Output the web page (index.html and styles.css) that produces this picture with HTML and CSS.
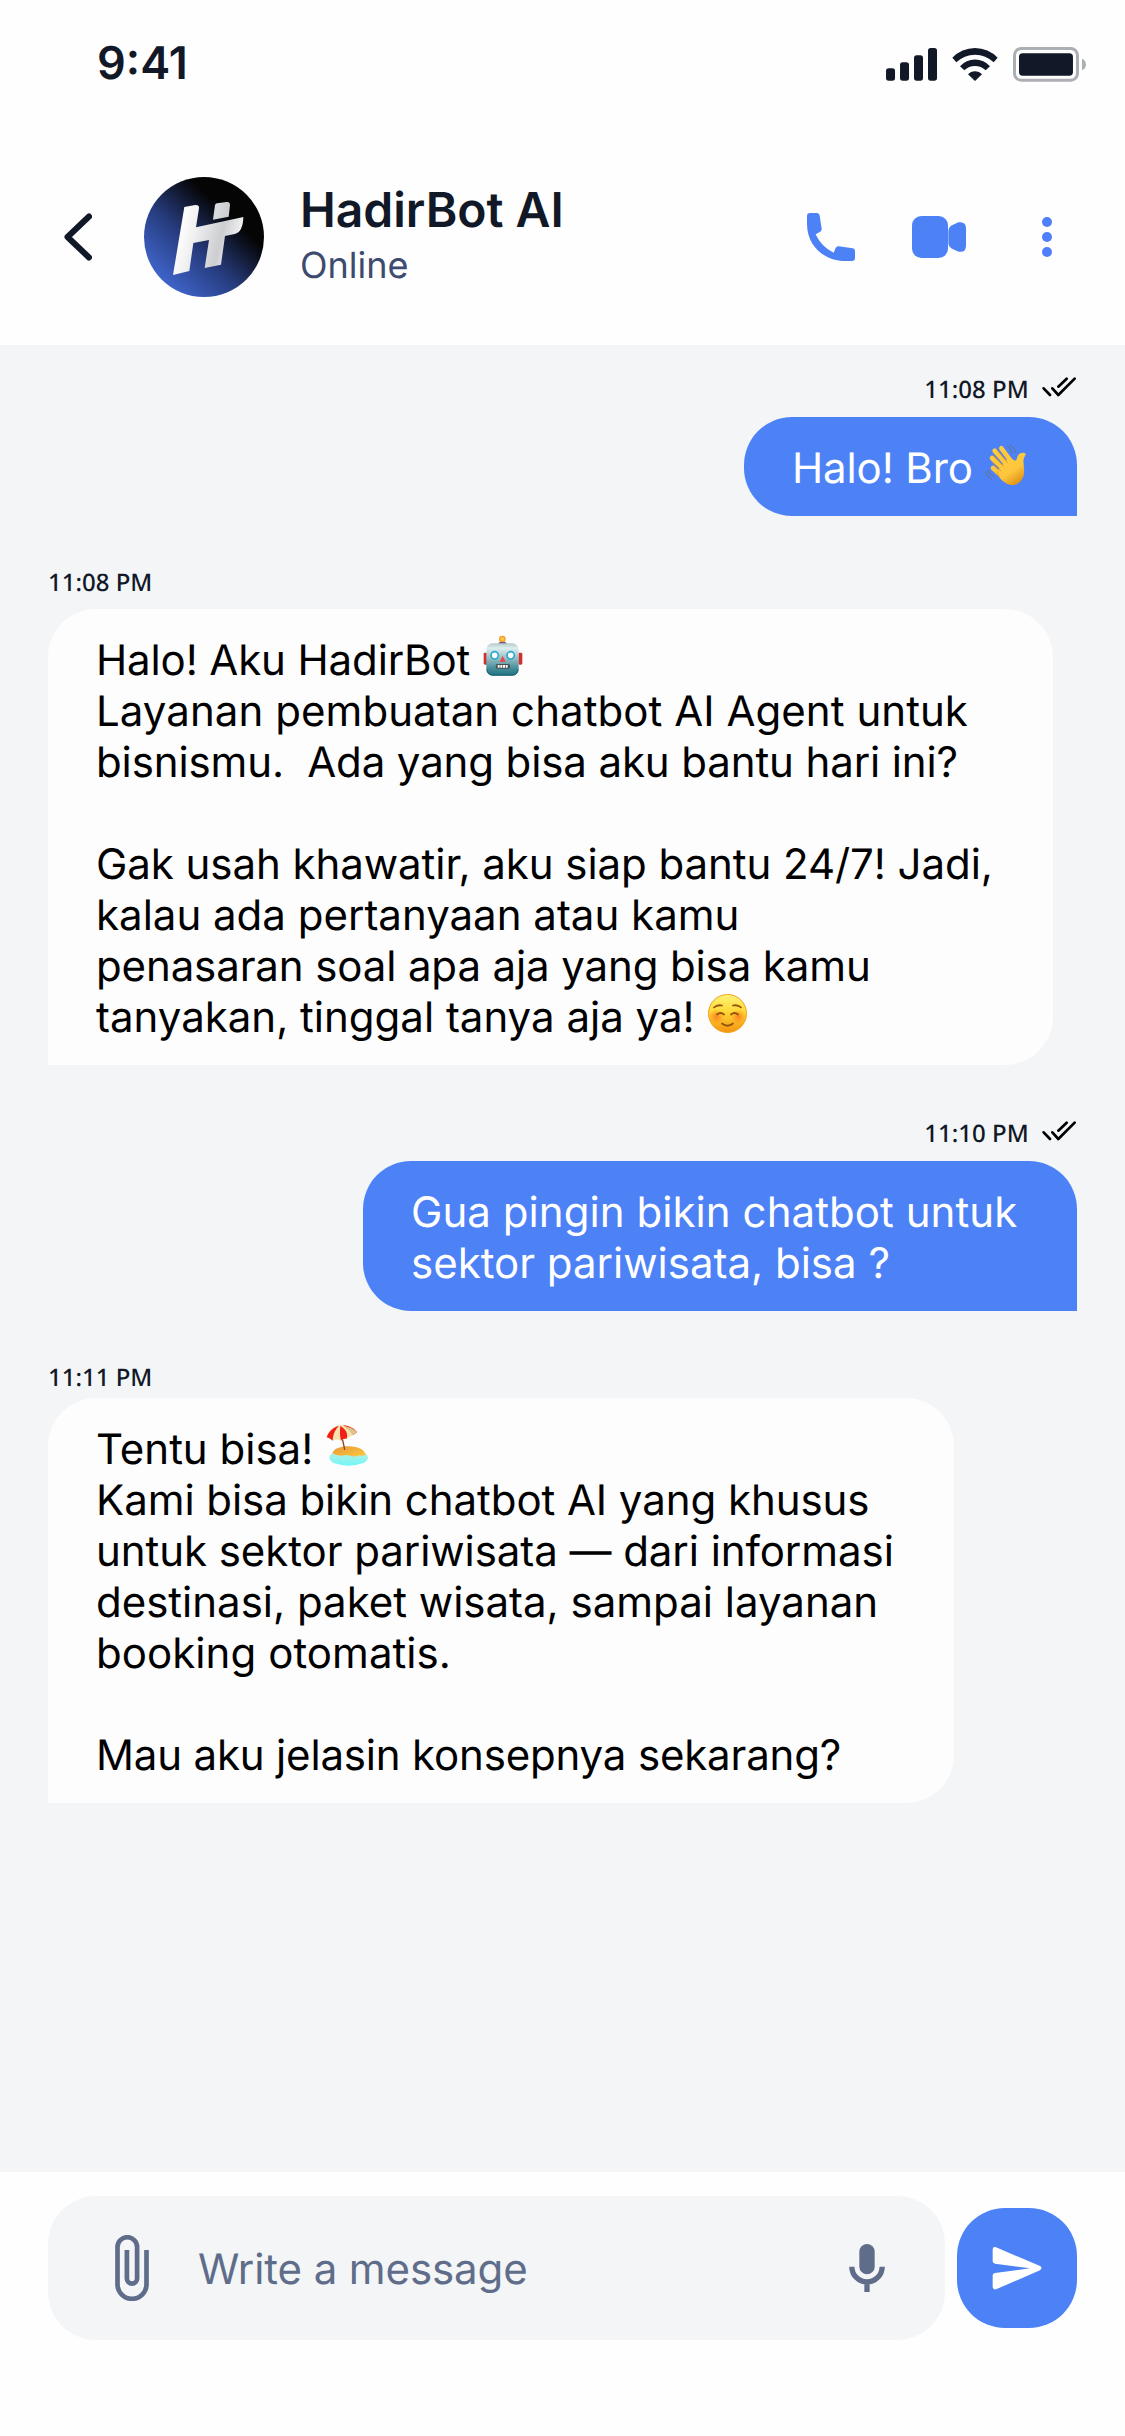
FILE: index.html
```html
<!DOCTYPE html>
<html lang="id">
<head>
<meta charset="utf-8">
<title>HadirBot AI</title>
<link rel="stylesheet" href="styles.css">
</head>
<body>
<div class="screen">
  <div class="status-bar">
    <span class="clock">9:41</span>
    <svg class="status-icons" viewBox="378 141 600 104">
      <g fill="#111827">
        <rect x="378" y="205" width="27" height="37" rx="8"/>
        <rect x="420" y="187" width="27" height="55" rx="8"/>
        <rect x="462" y="166" width="27" height="76" rx="8"/>
        <rect x="504" y="144" width="27" height="98" rx="8"/>
        <path d="M577 173A94 94 0 0 1 713 173L701 187A80 80 0 0 0 589 187z"/>
        <path d="M600 199A60 60 0 0 1 690 199L677 211A46 46 0 0 0 613 211z"/>
        <path d="M624 223A28 28 0 0 1 666 223L645 243z"/>
        <rect x="777" y="160" width="162" height="67" rx="11"/>
      </g>
      <rect x="763.500" y="145.500" width="189" height="95" rx="20" fill="none" stroke="#adaeb4" stroke-width="9"/>
      <path d="M966 176q12 5 12 17.500t-12 17.500z" fill="#adaeb4"/>
    </svg>
  </div>

  <header class="header">
    <svg class="back" viewBox="0 0 28 48"><path d="M25 3.500L3.500 24L25 44.500" fill="none" stroke="#111827" stroke-width="6" stroke-linecap="round" stroke-linejoin="round"/></svg>
    <svg class="avatar" viewBox="12 15 360 360">
      <defs>
        <linearGradient id="disc" gradientUnits="userSpaceOnUse" x1="72" y1="325" x2="262" y2="125">
          <stop offset="0" stop-color="#3e63c8"/><stop offset=".5" stop-color="#263b7c"/><stop offset="1" stop-color="#050505"/>
        </linearGradient>
        <linearGradient id="mark" gradientUnits="userSpaceOnUse" x1="110" y1="190" x2="290" y2="235">
          <stop offset="0" stop-color="#fff"/><stop offset=".25" stop-color="#f1f1f2"/><stop offset=".7" stop-color="#cdced1"/><stop offset="1" stop-color="#f1f1f2"/>
        </linearGradient>
      </defs>
      <circle cx="192" cy="195" r="180" fill="url(#disc)"/>
      <path fill="url(#mark)" d="M133 105L166 99q12-1 11 10L168 166L310 135q-1 45-26 51L255 192L243 278L194 288L207 204L160 213L148 297L99 309zM225 99q2-4 6-5L260 90q10-1 10 9L266 134L219 143z"/>
    </svg>
    <div class="contact">
      <div class="contact-name">HadirBot AI</div>
      <div class="contact-state">Online</div>
    </div>
    <div class="actions">
      <svg class="call" viewBox="141 639 144 144"><path d="M150 639h20q8 0 9 8l6 39q1 6-4 9l-14 8C180 730 198 747 221 758l6-14q3-6 9-5l42 6q7 1 7 8v21q0 9-9 9h-21C195 783 141 740 141 672v-24q0-9 9-9z"/></svg>
      <svg class="video" viewBox="456 648 162 126"><rect x="456" y="648" width="108" height="126" rx="28"/><path d="M565 692q2-12 11-16l19-9q23-4 23 18v52q0 22-22 18l-20-9q-10-5-11-16z"/></svg>
      <svg class="more" viewBox="846 651 30 120"><circle cx="861" cy="666" r="15"/><circle cx="861" cy="711" r="15"/><circle cx="861" cy="756" r="15"/></svg>
    </div>
  </header>

  <main class="chat">
    <section class="message sent">
      <div class="meta">11:08 PM
        <svg class="ticks" viewBox="192 21 103 60"><path d="M197 55L216 75M223 55L241 75L290 26M241 50L266 26"/></svg>
      </div>
      <div class="bubble w-short"><span class="snug">Halo! Bro</span><svg class="emoji wave" viewBox="18 219 129 129" role="img" aria-label="waving hand">
        <defs><linearGradient id="skin" x1="0" y1="0" x2=".6" y2="1"><stop offset="0" stop-color="#ffcf3d"/><stop offset=".65" stop-color="#fdc53c"/><stop offset="1" stop-color="#e0951a"/></linearGradient></defs>
        <g fill="none" stroke="url(#skin)" stroke-width="14" stroke-linecap="round">
          <path d="M70 235L100 275M50 242L90 288M42 264L85 305M45 294L75 322"/>
        </g>
        <path fill="url(#skin)" d="M92 262L104 268c4 5 11 5 12 0 2-9 5-14 11-18 7-4 17-2 16 4-6 9-8 17-6 28 2 20 3 33-5 46-7 12-21 19-34 17-14-3-24-12-33-22L60 300z"/>
        <path d="M58 241L88 277M44 254L76 288M42 277L68 302" fill="none" stroke="#d08a14" stroke-width="2.500" stroke-linecap="round"/>
        <path d="M97 224q14 9 17 24M89 229q11 7 14 21M29 300q5 13 17 19M22 306q5 14 19 22" fill="none" stroke="#68717e" stroke-width="3" stroke-linecap="round"/>
      </svg></div>
    </section>

    <section class="message received">
      <div class="meta">11:08 PM</div>
      <div class="bubble w-full"><span class="snug">Halo! Aku HadirBot</span><svg class="emoji robot" viewBox="42 15 120 123" role="img" aria-label="robot">
        <defs>
          <linearGradient id="metal" x1="0" y1="0" x2="0" y2="1"><stop offset="0" stop-color="#b7c9c7"/><stop offset=".15" stop-color="#dceff0"/><stop offset=".4" stop-color="#a9c6ca"/><stop offset=".75" stop-color="#4a929f"/><stop offset="1" stop-color="#216f80"/></linearGradient>
          <radialGradient id="lamp"><stop offset="0" stop-color="#ffe35a"/><stop offset="1" stop-color="#f28d1c"/></radialGradient>
        </defs>
        <path d="M86 45q0-8 14-11q15 3 15 11z" fill="#665184"/>
        <circle cx="100" cy="27" r="10" fill="url(#lamp)"/>
        <rect x="44" y="68" width="12" height="36" rx="4" fill="#cf302d"/><rect x="148" y="68" width="12" height="36" rx="4" fill="#cf302d"/>
        <rect x="52" y="40" width="97" height="97" rx="19" fill="url(#metal)"/>
        <path d="M54 118q1 17 18 17h57q17 0 18-17" fill="none" stroke="#1b6274" stroke-width="3"/>
        <circle cx="77" cy="76" r="11" fill="#fff" stroke="#26a9cf" stroke-width="5"/>
        <circle cx="125" cy="76" r="11" fill="#fff" stroke="#26a9cf" stroke-width="5"/>
        <path d="M101 77L110 96H92z" fill="#e64950"/>
        <rect x="80" y="102" width="43" height="14" rx="6" fill="#454d50"/>
        <path d="M86 105h6v8h-6zM94 105h6v8h-6zM102 105h6v8h-6zM110 105h6v8h-6z" fill="#fff"/>
      </svg><br><span class="loose">Layanan pembuatan chatbot AI Agent untuk</span><br><span class="snug">bisnismu.&nbsp; Ada yang bisa aku bantu hari ini?</span><br><br><span class="trim">Gak usah khawatir, aku siap bantu 24/7! Jadi,</span><br>kalau ada pertanyaan atau kamu<br><span class="snug">penasaran soal apa aja yang bisa kamu</span><br>tanyakan, tinggal tanya aja ya!<svg class="emoji smile" viewBox="0 0 78 78" role="img" aria-label="smiling face">
        <defs>
          <linearGradient id="face" x1="0" y1="0" x2="0" y2="1"><stop offset="0" stop-color="#fff27a"/><stop offset=".45" stop-color="#ffd936"/><stop offset="1" stop-color="#f5930f"/></linearGradient>
          <radialGradient id="blush"><stop offset="0" stop-color="#ff6a1f" stop-opacity=".75"/><stop offset="1" stop-color="#ff7a1f" stop-opacity="0"/></radialGradient>
        </defs>
        <circle cx="39" cy="39" r="38" fill="url(#face)" stroke="#f0a21b" stroke-width="2"/>
        <circle cx="17" cy="45" r="15" fill="url(#blush)"/><circle cx="61" cy="45" r="15" fill="url(#blush)"/>
        <path d="M12 27q6-6 16-4M66 27q-6-6-16-4M18 41q7-6 14 0M46 41q7-6 14 0M28 59q11 9 22 0" fill="none" stroke="#94540c" stroke-width="3.500" stroke-linecap="round"/>
      </svg></div>
    </section>

    <section class="message sent">
      <div class="meta">11:10 PM
        <svg class="ticks" viewBox="192 21 103 60"><path d="M197 55L216 75M223 55L241 75L290 26M241 50L266 26"/></svg>
      </div>
      <div class="bubble w-reply"><span class="loose">Gua pingin bikin chatbot untuk</span><br>sektor pariwisata, bisa ?</div>
    </section>

    <section class="message received tight">
      <div class="meta">11:11 PM</div>
      <div class="bubble w-wide">Tentu bisa!<svg class="emoji beach" viewBox="975 226 128 124" role="img" aria-label="beach with umbrella">
        <defs>
          <linearGradient id="sea" x1="0" y1="0" x2="0" y2="1"><stop offset="0" stop-color="#c9eddc"/><stop offset="1" stop-color="#6ff7fa"/></linearGradient>
          <linearGradient id="sand" x1="0" y1="0" x2="1" y2="1"><stop offset="0" stop-color="#e5973a"/><stop offset="1" stop-color="#ffca3c"/></linearGradient>
        </defs>
        <ellipse cx="1043" cy="324" rx="58" ry="24" fill="url(#sea)"/>
        <path d="M994 311c5-15 25-21 48-21 31 0 50 12 52 26-8 5-17-1-25 3-13 4-21-2-32-3-15 3-30 3-43-5z" fill="url(#sand)"/>
        <path d="M1022 258L1031 299" stroke="#8d421c" stroke-width="4" stroke-linecap="round"/>
        <path d="M977 263c7-23 23-35 43-36 24 0 43 8 49 21l-33 20c-6-2-11 0-16 5-10-6-17-4-25 0-6-5-11-10-18-10z" fill="#f5e2ac"/>
        <path d="M977 263c7-18 18-29 37-35-9 9-18 23-19 45-6-5-11-9-18-10zM1018 229c13 7 27 23 18 39-6-2-11 0-16 5q-5-18-2-44zM1026 227c21 2 34 10 42 21l-12 8q-9-18-30-29z" fill="#f02015"/>
        <path d="M1030 229q24 4 38 19l-14 9q-7-18-24-28z" fill="#d9c88d"/>
      </svg><br><span class="trim">Kami bisa bikin chatbot AI yang khusus</span><br><span class="trim">untuk sektor pariwisata — dari informasi</span><br>destinasi, paket wisata, sampai layanan<br><span class="loose">booking otomatis.</span><br><br><span class="snug closing">Mau aku jelasin konsepnya sekarang?</span></div>
    </section>
  </main>

  <footer class="composer">
    <div class="field">
      <svg class="clip" viewBox="0 0 34 66"><path d="M31.500 15V49.300a14.500 14.500 0 0 1-29 0V12a9.800 9.800 0 0 1 19.600 0V43.500a5.100 5.100 0 0 1-10.200 0V15" fill="none" stroke="#606d8a" stroke-width="4.700"/></svg>
      <span class="placeholder">Write a message</span>
      <svg class="mic" viewBox="147 252 108 144"><rect x="178" y="252" width="46" height="91" rx="23" fill="#606d8a"/><path d="M155.500 320a45.500 45.500 0 0 0 91 0M201 366V396" fill="none" stroke="#606d8a" stroke-width="16"/></svg>
    </div>
    <div class="send">
      <svg viewBox="576 260 150 129"><path fill="#fff" d="M578 267q1-9 10-6L720 317q9 6 0 13L588 387q-9 2-10-6v-36q0-6 7-7L690 324L585 310q-7-1-7-7z"/></svg>
    </div>
  </footer>
</div>
</body>
</html>
```
FILE: styles.css
```css
* { box-sizing: border-box; }

body {
  margin: 0;
  background: #fefefe;
  font-family: Inter, sans-serif;
  color: #111827;
  text-rendering: geometricPrecision;
}

svg { display: block; flex: none; }

.screen {
  width: 1125px;
  height: 2436px;
  display: flex;
  flex-direction: column;
  overflow: hidden;
}

.status-bar {
  height: 129px;
  padding: 35px 39px 0 97px;
  display: flex;
  justify-content: space-between;
  align-items: flex-start;
}

.clock {
  margin-top: 1px;
  font-size: 45px;
  line-height: 54px;
  font-weight: 600;
}

.status-icons {
  width: 200px;
  height: 34.67px;
  margin-top: 12px;
}

.header {
  height: 216px;
  padding: 0 73px 0 64px;
  display: flex;
  align-items: center;
}

.back { width: 28px; height: 48px; }

.avatar {
  width: 120px;
  height: 120px;
  margin-left: 52px;
}

.contact {
  margin-left: 36px;
  margin-bottom: 6px;
  white-space: nowrap;
}

.contact-name {
  font-size: 48px;
  line-height: 58px;
  font-weight: 600;
}

.contact-state {
  font-size: 36px;
  line-height: 44px;
  margin-top: 4px;
  color: #3c4b6e;
}

.actions {
  margin-left: auto;
  display: flex;
  align-items: center;
  gap: 57px;
  fill: #4d82f7;
}

.call { width: 48px; height: 48px; }
.video { width: 54px; height: 42px; }
.more { width: 10px; height: 40px; margin-left: 19px; fill: #4f7ffa; }

.chat {
  height: 1827px;
  padding: 26px 48px 0;
  background: #f3f5f7;
  display: flex;
  flex-direction: column;
}

.message { display: flex; flex-direction: column; }
.sent { align-items: flex-end; }
.received { align-items: flex-start; margin-top: 48px; }
.received + .sent { margin-top: 50px; }

.meta {
  display: flex;
  align-items: center;
  gap: 13px;
  height: 36px;
  padding-top: 1px;
  margin-bottom: 10px;
  font-family: "Noto Sans", sans-serif;
  font-size: 24px;
  line-height: 36px;
  font-weight: 500;
}

.received .meta { margin-bottom: 9px; padding-top: 2px; }
.tight .meta { margin-bottom: 3px; }

.ticks {
  width: 34.33px;
  height: 20px;
  margin: -5px 1px 0 0;
  fill: none;
  stroke: #000;
  stroke-width: 8px;
  stroke-linecap: round;
  stroke-linejoin: round;
}

.bubble {
  padding: 26px 48px 22px;
  font-size: 42px;
  line-height: 51px;
  white-space: nowrap;
}

.sent .bubble {
  background: #4d82f7;
  color: #fff;
  border-radius: 48px 48px 0 48px;
}

.received .bubble {
  background: #fdfdfe;
  color: #000;
  border-radius: 48px 48px 48px 0;
}

.w-short { width: 333px; }
.w-reply { width: 714px; }
.w-wide { width: 906px; }
.w-full { width: 1005px; }

.snug { letter-spacing: -0.12px; }
.trim { letter-spacing: -0.06px; }
.loose { letter-spacing: 0.06px; }
.closing { letter-spacing: -0.17px; }

.emoji { display: inline-block; margin-left: 13px; }
.wave { width: 43px; height: 43px; margin-left: 11px; vertical-align: -3px; }
.robot { width: 40px; height: 41px; vertical-align: -1px; }
.smile { width: 39px; height: 39px; vertical-align: -1px; }
.beach { width: 42.67px; height: 41.33px; vertical-align: -2px; }

.composer {
  flex: 1;
  padding: 24px 48px 0;
  display: flex;
  align-items: flex-start;
  gap: 12px;
}

.field {
  width: 897px;
  height: 144px;
  padding: 0 60px 0 67px;
  border-radius: 48px;
  background: #f3f5f7;
  display: flex;
  align-items: center;
}

.clip { width: 34px; height: 66px; }

.placeholder {
  flex: 1;
  margin: 2px 0 0 49px;
  font-size: 42px;
  line-height: 51px;
  letter-spacing: -0.1px;
  color: #606d8a;
}

.mic { width: 36px; height: 48px; }

.send {
  width: 120px;
  height: 120px;
  margin-top: 12px;
  border-radius: 48px;
  background: #4d82f7;
  display: flex;
  align-items: center;
  justify-content: center;
}

.send svg { width: 50px; height: 43px; }
```
